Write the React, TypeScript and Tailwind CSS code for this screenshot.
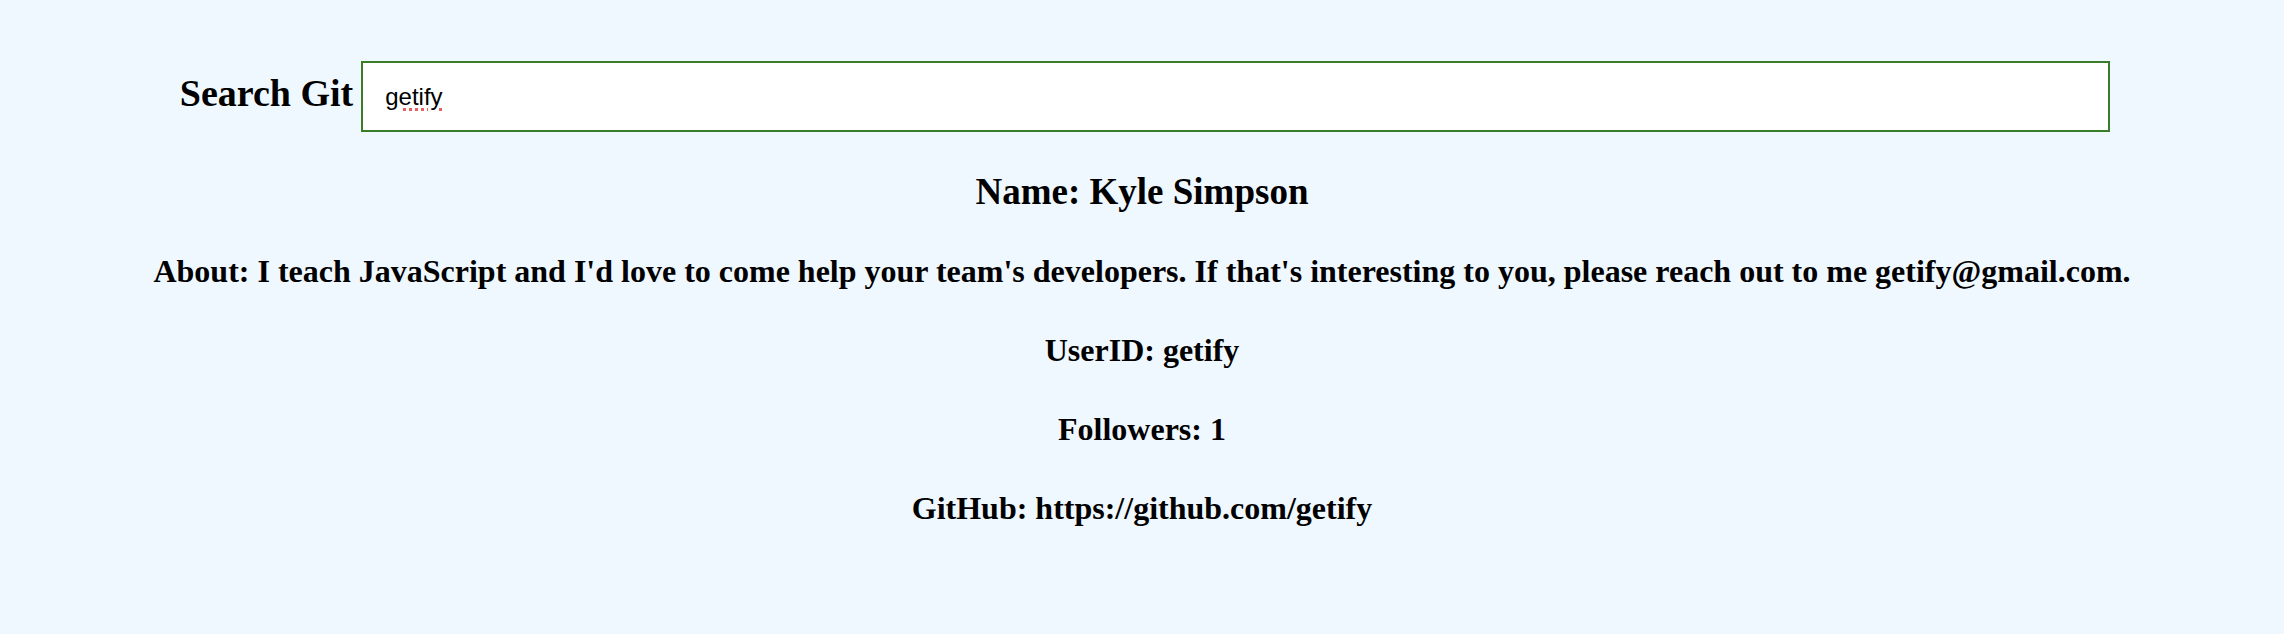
import React from "react";

export default function App() {
  const serif = "font-['Liberation_Serif','Times_New_Roman',serif]";
  return (
    <div className={`min-h-[634px] w-full bg-[#f0f8ff] pt-[61px] text-black ${serif}`}>
      <div className="flex items-start justify-center gap-[8px] pl-[6px]">
        <h2 className="mt-[13px] text-[38px] leading-[38px] font-bold whitespace-nowrap">Search Git</h2>
        <div className="flex h-[71px] w-[1749px] items-center border-2 border-[#3a7d28] bg-white pl-[22px]">
          <span className="font-['Liberation_Sans',Arial,sans-serif] text-[24px] leading-none text-black underline decoration-dotted decoration-[#e66060] decoration-[3px] underline-offset-[3px]">
            getify
          </span>
        </div>
      </div>
      <div className="mt-[20px] flex flex-col items-center">
        <h2 className="h-[80px] text-[37px] leading-[80px] font-bold whitespace-nowrap">Name: Kyle Simpson</h2>
        <h3 className="h-[79px] text-[32px] leading-[79px] font-bold whitespace-nowrap">
          About: I teach JavaScript and I'd love to come help your team's developers. If that's interesting to you, please reach out to me getify@gmail.com.
        </h3>
        <h3 className="h-[79px] text-[32px] leading-[79px] font-bold whitespace-nowrap">UserID: getify</h3>
        <h3 className="h-[79px] text-[32px] leading-[79px] font-bold whitespace-nowrap">Followers: 1</h3>
        <h3 className="h-[79px] text-[32px] leading-[79px] font-bold whitespace-nowrap">GitHub: https://github.com/getify</h3>
      </div>
    </div>
  );
}
